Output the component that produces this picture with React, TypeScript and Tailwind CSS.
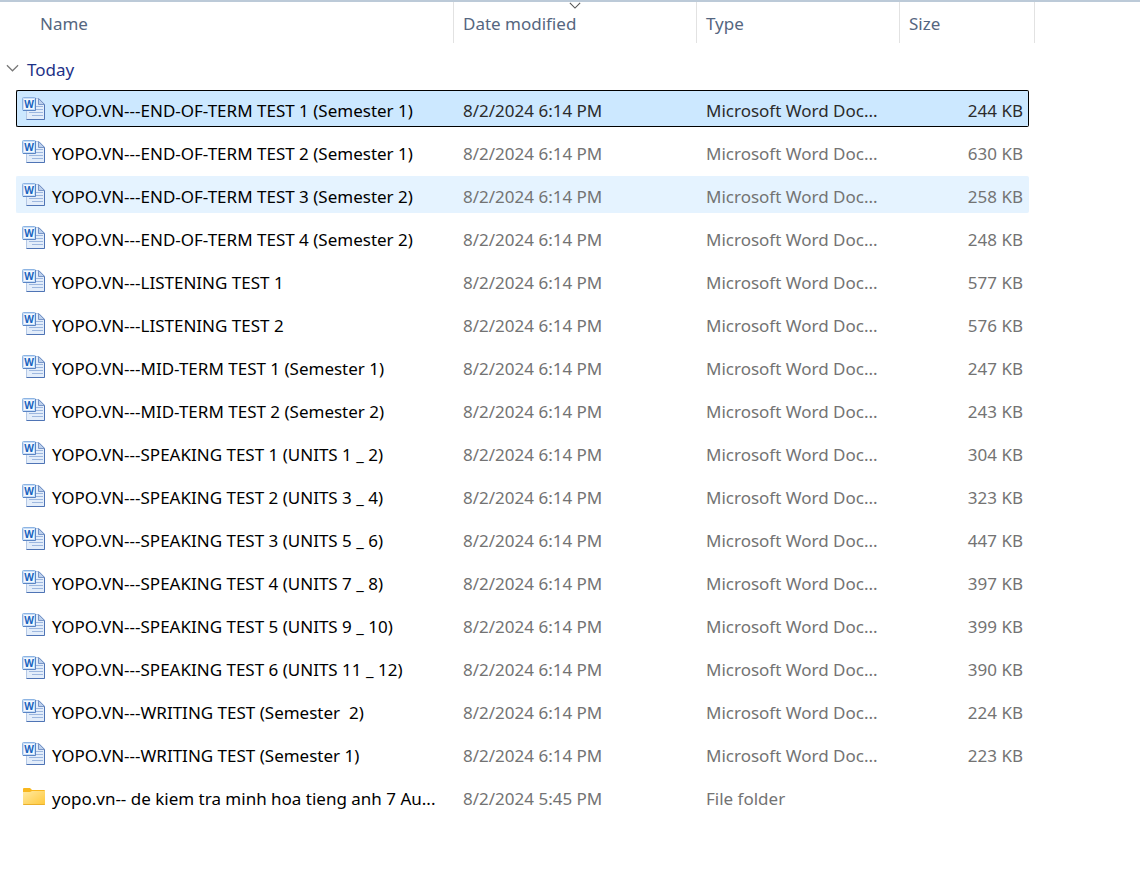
import { clsx } from 'clsx';

type FileItem = {
    name: string;
    modified: string;
    kind: 'word' | 'folder';
    size: string;
    state?: 'selected' | 'hover';
};

const files: FileItem[] = [
    { name: 'YOPO.VN---END-OF-TERM TEST 1 (Semester 1)', modified: '8/2/2024 6:14 PM', kind: 'word', size: '244 KB', state: 'selected' },
    { name: 'YOPO.VN---END-OF-TERM TEST 2 (Semester 1)', modified: '8/2/2024 6:14 PM', kind: 'word', size: '630 KB' },
    { name: 'YOPO.VN---END-OF-TERM TEST 3 (Semester 2)', modified: '8/2/2024 6:14 PM', kind: 'word', size: '258 KB', state: 'hover' },
    { name: 'YOPO.VN---END-OF-TERM TEST 4 (Semester 2)', modified: '8/2/2024 6:14 PM', kind: 'word', size: '248 KB' },
    { name: 'YOPO.VN---LISTENING TEST 1', modified: '8/2/2024 6:14 PM', kind: 'word', size: '577 KB' },
    { name: 'YOPO.VN---LISTENING TEST 2', modified: '8/2/2024 6:14 PM', kind: 'word', size: '576 KB' },
    { name: 'YOPO.VN---MID-TERM TEST 1 (Semester 1)', modified: '8/2/2024 6:14 PM', kind: 'word', size: '247 KB' },
    { name: 'YOPO.VN---MID-TERM TEST 2 (Semester 2)', modified: '8/2/2024 6:14 PM', kind: 'word', size: '243 KB' },
    { name: 'YOPO.VN---SPEAKING TEST 1 (UNITS 1 _ 2)', modified: '8/2/2024 6:14 PM', kind: 'word', size: '304 KB' },
    { name: 'YOPO.VN---SPEAKING TEST 2 (UNITS 3 _ 4)', modified: '8/2/2024 6:14 PM', kind: 'word', size: '323 KB' },
    { name: 'YOPO.VN---SPEAKING TEST 3 (UNITS 5 _ 6)', modified: '8/2/2024 6:14 PM', kind: 'word', size: '447 KB' },
    { name: 'YOPO.VN---SPEAKING TEST 4 (UNITS 7 _ 8)', modified: '8/2/2024 6:14 PM', kind: 'word', size: '397 KB' },
    { name: 'YOPO.VN---SPEAKING TEST 5 (UNITS 9 _ 10)', modified: '8/2/2024 6:14 PM', kind: 'word', size: '399 KB' },
    { name: 'YOPO.VN---SPEAKING TEST 6 (UNITS 11 _ 12)', modified: '8/2/2024 6:14 PM', kind: 'word', size: '390 KB' },
    { name: 'YOPO.VN---WRITING TEST (Semester  2)', modified: '8/2/2024 6:14 PM', kind: 'word', size: '224 KB' },
    { name: 'YOPO.VN---WRITING TEST (Semester 1)', modified: '8/2/2024 6:14 PM', kind: 'word', size: '223 KB' },
    { name: 'yopo.vn-- de kiem tra minh hoa tieng anh 7 Au...', modified: '8/2/2024 5:45 PM', kind: 'folder', size: '' },
];

function WordIcon() {
    return (
        <svg viewBox="0 0 24 24" className="mb-1 size-6 shrink-0" aria-hidden="true">
            <path d="M4.5 1.5h12.500l5.500 5.500v15.500h-18z" fill="#e3edfa" stroke="#b4c8e6" />
            <path d="M22.500 7v15.500h-18" fill="none" stroke="#4f74b5" />
            <path d="M16.500 1.500v6h6z" fill="#bdd0ec" stroke="#7896c8" />
            <path d="M14 9.500h7M14 12.500h7M7 15.500h14M10 18.500h11" stroke="#9db7df" />
            <rect x="0.5" y="0.5" width="13" height="13" rx="1" fill="#c9def7" stroke="#8db4e3" />
            <path d="M13.500 1v12.500H1" fill="none" stroke="#5b85c4" />
            <rect x="2" y="2" width="10" height="10" fill="#f3f9ff" />
            <text x="7" y="11" textAnchor="middle" fontSize="10" fontWeight="700" fill="#1763bd" fontFamily="Open Sans, sans-serif">
                W
            </text>
        </svg>
    );
}

function FolderIcon() {
    return (
        <svg viewBox="0 0 24 24" className="mb-1 size-6 shrink-0" aria-hidden="true">
            <defs>
                <linearGradient id="folder" x1="0" y1="0" x2="1" y2="1">
                    <stop offset="0" stopColor="#ffe9a0" />
                    <stop offset="1" stopColor="#ffc83a" />
                </linearGradient>
            </defs>
            <path d="M1 4q0-1 1-1h6l2 2h12q1 0 1 1v3H1z" fill="#f8b71e" />
            <path d="M1 7h7l2-1h13v13q0 1-1 1H2q-1 0-1-1z" fill="url(#folder)" />
            <path d="M1 19q0 1 1 1h20q1 0 1-1z" fill="#eab02c" />
        </svg>
    );
}

function Chevron({ className }: { className?: string }) {
    return (
        <svg viewBox="0 0 14 8" className={className} fill="none" stroke="currentColor" strokeWidth="1.3" aria-hidden="true">
            <path d="M1 1l6 6 6-6" />
        </svg>
    );
}

const box = 'flex h-[37px] items-center border-y pt-[5px] whitespace-pre';

function Row({ file }: { file: FileItem }) {
    const selected = file.state === 'selected';
    const tone = clsx(
        selected && 'border-black bg-[#cce8ff]',
        file.state === 'hover' && 'border-[#e5f3ff] bg-[#e5f3ff]',
        !file.state && 'border-transparent'
    );
    const detail = selected ? 'text-[#2b2b2b]' : 'text-[#737373]';

    return (
        <tr aria-selected={selected}>
            <td />
            <td className="py-[3px]">
                <div className={clsx(box, tone, 'gap-[6px] rounded-l-xs border-l pl-[5px] text-black')}>
                    {file.kind === 'word' ? <WordIcon /> : <FolderIcon />}
                    <span>{file.name}</span>
                </div>
            </td>
            <td className="py-[3px]">
                <div className={clsx(box, tone, detail, 'pl-[9px]')}>{file.modified}</div>
            </td>
            <td className="py-[3px]">
                <div className={clsx(box, tone, detail, 'pl-[9px]')}>
                    {file.kind === 'word' ? 'Microsoft Word Doc...' : 'File folder'}
                </div>
            </td>
            <td className="py-[3px]">
                <div className={clsx(box, tone, detail, 'justify-end rounded-r-xs border-r pr-[5px]')}>{file.size}</div>
            </td>
            <td />
            <td />
        </tr>
    );
}

export default function App() {
    return (
        <main className="min-h-screen border-t-2 border-[#bccad8] bg-white font-['Segoe_UI','Noto_Sans',sans-serif] text-[17px] leading-6">
            <table className="w-full table-fixed border-separate border-spacing-0 text-left">
                <colgroup>
                    <col className="w-4" />
                    <col className="w-[438px]" />
                    <col className="w-[243px]" />
                    <col className="w-[203px]" />
                    <col className="w-[129px]" />
                    <col className="w-[6px]" />
                    <col />
                </colgroup>
                <thead>
                    <tr className="h-[41px] text-[#556680] *:px-0 *:pt-[2px] *:pb-0 *:font-normal">
                        <td />
                        <th scope="col" className="border-r border-[#e2e2e2]">
                            <button type="button" className="block pl-6">Name</button>
                        </th>
                        <th scope="col" aria-sort="descending" className="relative border-r border-[#e2e2e2]">
                            <Chevron className="absolute top-0 left-1/2 h-[7px] w-3 -translate-x-1/2 text-[#555555]" />
                            <button type="button" className="block pl-[9px]">Date modified</button>
                        </th>
                        <th scope="col" className="border-r border-[#e2e2e2]">
                            <button type="button" className="block pl-[9px]">Type</button>
                        </th>
                        <th scope="col">
                            <button type="button" className="block pl-[9px]">Size</button>
                        </th>
                        <td className="border-r border-[#e2e2e2]" />
                        <td />
                    </tr>
                </thead>
                <tbody>
                    <tr className="h-11">
                        <td colSpan={7} className="p-0 pt-[10px]">
                            <button type="button" aria-expanded="true" className="flex items-center gap-2 pl-[6px] text-[#1e3287]">
                                <Chevron className="mb-1 h-2 w-[13px] text-[#777777]" />
                                Today
                            </button>
                        </td>
                    </tr>
                    {files.map((file) => (
                        <Row key={file.name} file={file} />
                    ))}
                </tbody>
            </table>
        </main>
    );
}
